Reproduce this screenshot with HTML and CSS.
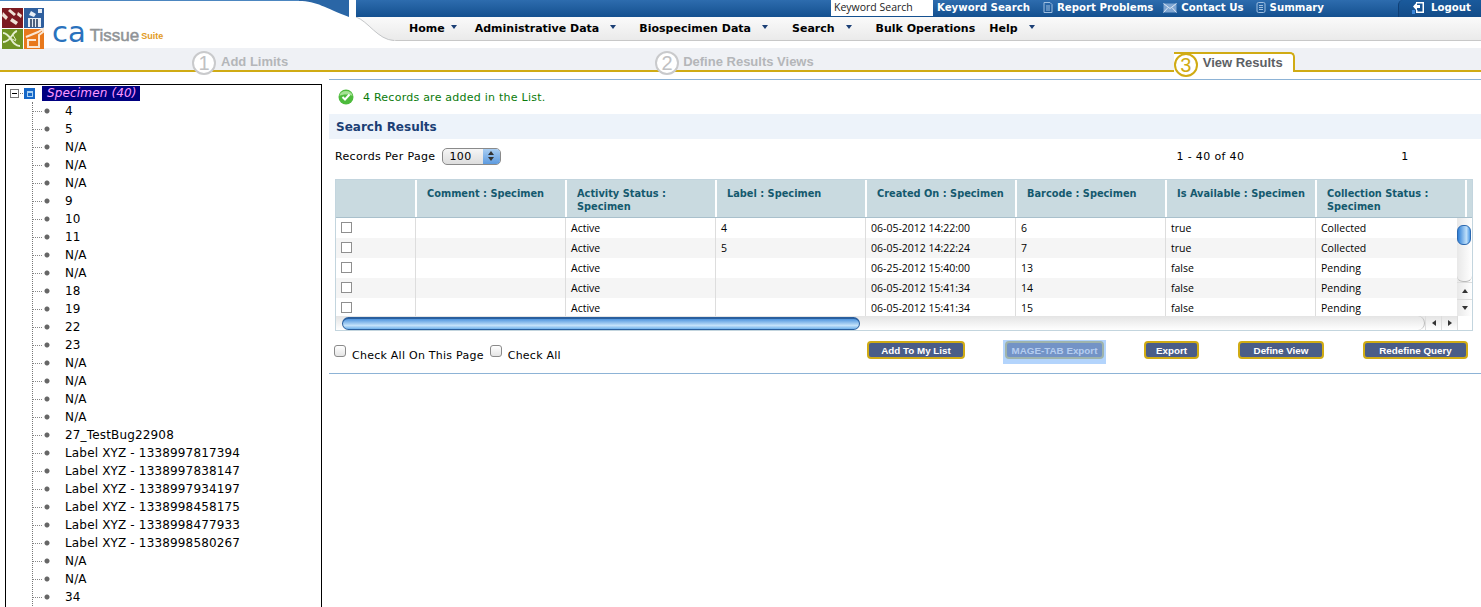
FILE: index.html
```html
<!DOCTYPE html>
<html lang="en">
<head>
    <meta charset="UTF-8">
    <link rel="stylesheet" href="styles.css">
    <title>caTissue Suite - View Results</title>
</head>
<body>

    <header class="top">
        <div class="brand">
            <div class="brand-bar"><svg class="brand-curve" width="50" height="17" viewBox="0 0 50 17"><path d="M0 1 C18 1 26 8 50 17 L50 0 L0 0 Z" fill="#2a66a6"/></svg></div>
            <div class="logo">
                <svg class="logo-tiles" width="45" height="46" viewBox="0 0 45 46">
                    <rect x="2" y="4" width="21" height="20" fill="#7c1a20"/>
                    <path d="M3 8l5 5-2 3-4-4zM10 5l6 5-2 2-6-5zM12 14l6 4-2 3-6-4zM18 8l4 3-1 3-4-3z" fill="#efe2d6"/>
                    <rect x="24" y="4" width="20" height="20" fill="#2f5f9e"/>
                    <path d="M28 14h13v9h-13zM31 7l5 3-2 3-5-2zM38 5h4v4h-4z" fill="#e6edf5"/>
                    <path d="M31 15v8M34 15v8M37 15v8" stroke="#1c3557" stroke-width="1.500"/>
                    <rect x="2" y="25" width="21" height="20" fill="#6f9222"/>
                    <path d="M3 29c8 0 8 13 17 13M3 38c8 0 9-10 14-11" stroke="#e6efcf" stroke-width="1.800" fill="none"/>
                    <path d="M10 34l6 3M13 31l3 5" stroke="#e6efcf"/>
                    <rect x="24" y="25" width="20" height="20" fill="#e8781c"/>
                    <path d="M26 33l12-5 5-3v3l-4 3v12h-11v-7h8" stroke="#fbe6d2" stroke-width="2" fill="none"/>
                </svg>
                <span class="logo-ca">ca</span><span class="logo-tissue">Tissue</span><span class="logo-suite">Suite</span>
            </div>
        </div>
        <div class="nav">
            <div class="nav-top">
                <div class="search-box">Keyword Search</div>
                <a class="top-link top-first">Keyword Search</a>
                <a class="top-link"><svg class="top-icon" width="10" height="11" viewBox="0 0 10 11"><path d="M1 .5h6l2 2v8H1z" fill="none" stroke="#9fbfe0"/><path d="M3 4h4M3 6h4M3 8h4" stroke="#9fbfe0"/></svg>Report Problems</a>
                <a class="top-link top-contact"><svg class="top-icon" width="14" height="10" viewBox="0 0 14 10"><path d="M.5.5h13v9H.5z" fill="#7fa6d2"/><path d="M.5.5l6.5 5 6.500-5M.5 9.500l4.500-5M13.500 9.500l-4.500-5" fill="none" stroke="#dbe7f4"/></svg>Contact Us</a>
                <a class="top-link top-summary"><svg class="top-icon" width="10" height="11" viewBox="0 0 10 11"><rect x="1" y=".5" width="8" height="10" rx="1.500" fill="none" stroke="#9fbfe0"/><path d="M3 3.500h4M3 5.500h4M3 7.500h4" stroke="#9fbfe0"/></svg>Summary</a>
                <a class="logout"><svg class="logout-icon" width="13" height="13" viewBox="0 0 13 13"><path d="M5 2.500h-1v-1.500h8v11H4v-3h1.500v1.500h5V2.500z" fill="#fff"/><path d="M0 7V4h3V1l4 4.500L3 10V7z" fill="#fff" transform="matrix(-1 0 0 1 8 0)"/><path d="M0 9h3v4H0z" fill="#3b86d8"/></svg>Logout</a>
            </div>
            <div class="nav-menu">
                <svg class="menu-curve" width="40" height="24" viewBox="0 0 40 24"><path d="M0 0 C12 4 22 23 38 23.500 L40 24 L0 24 Z" fill="#ffffff"/><path d="M0 0 C12 4 22 23 38 23.500" fill="none" stroke="#c4c6c8"/></svg>
                <a class="menu-item menu-home">Home<i class="caret"></i></a>
                <a class="menu-item menu-admin">Administrative Data<i class="caret"></i></a>
                <a class="menu-item menu-bio">Biospecimen Data<i class="caret"></i></a>
                <a class="menu-item menu-search">Search<i class="caret"></i></a>
                <a class="menu-item menu-bulk">Bulk Operations</a>
                <a class="menu-item menu-help">Help<i class="caret"></i></a>
            </div>
        </div>
    </header>

    <div class="steps">
        <div class="step step-one"><span class="step-num">1</span>Add Limits</div>
        <div class="step step-two"><span class="step-num">2</span>Define Results Views</div>
        <div class="step step-active"><span class="step-num">3</span>View Results</div>
    </div>

    <div class="main">
        <aside class="tree">
            <div class="tree-root">
                <span class="tree-toggle"></span>
                <span class="tree-link"></span>
                <svg class="tree-folder" width="11" height="11" viewBox="0 0 11 11"><rect width="11" height="11" fill="#1668c8"/><rect x="3" y="3" width="6" height="6" fill="#a9d2f5"/><rect x="4" y="5" width="4" height="3" fill="#1668c8"/></svg>
                <span class="tree-title">Specimen (40)</span>
            </div>
            <ul class="tree-list">
                <li>4</li><li>5</li><li>N/A</li><li>N/A</li><li>N/A</li><li>9</li><li>10</li><li>11</li>
                <li>N/A</li><li>N/A</li><li>18</li><li>19</li><li>22</li><li>23</li><li>N/A</li><li>N/A</li>
                <li>N/A</li><li>N/A</li><li>27_TestBug22908</li>
                <li>Label XYZ - 1338997817394</li>
                <li>Label XYZ - 1338997838147</li>
                <li>Label XYZ - 1338997934197</li>
                <li>Label XYZ - 1338998458175</li>
                <li>Label XYZ - 1338998477933</li>
                <li>Label XYZ - 1338998580267</li>
                <li>N/A</li><li>N/A</li><li>34</li>
            </ul>
        </aside>

        <section class="content">
            <div class="message">
                <svg class="ok-icon" width="16" height="16" viewBox="0 0 16 16"><circle cx="8" cy="8" r="7.500" fill="#4dbb3c"/><path d="M1.500 7a6.500 5 0 0 1 13 0c-3-2-10-2-13 0z" fill="#a5e294"/><path d="M4.500 8l2.500 2.500 4.500-5" fill="none" stroke="#fff" stroke-width="2"/></svg>
                4 Records are added in the List.
            </div>
            <h2 class="section-title">Search Results</h2>

            <div class="paging">
                <label class="per-page">Records Per Page
                    <span class="fake-select"><span class="fake-value">100</span><span class="fake-arrows"><i class="up"></i><i class="down"></i></span></span>
                </label>
                <span class="page-range">1 - 40 of 40</span>
                <span class="page-num">1</span>
            </div>

            <div class="grid">
                <div class="grid-head">
                    <div class="head-cell"></div>
                    <div class="head-cell">Comment : Specimen</div>
                    <div class="head-cell">Activity Status : Specimen</div>
                    <div class="head-cell">Label : Specimen</div>
                    <div class="head-cell">Created On : Specimen</div>
                    <div class="head-cell">Barcode : Specimen</div>
                    <div class="head-cell">Is Available : Specimen</div>
                    <div class="head-cell">Collection Status : Specimen</div>
                    <div class="head-cell"></div>
                </div>
                <div class="grid-middle">
                    <div class="grid-rows">
                        <div class="row"><div class="cell"><span class="check"></span></div><div class="cell"></div><div class="cell">Active</div><div class="cell">4</div><div class="cell">06-05-2012 14:22:00</div><div class="cell">6</div><div class="cell">true</div><div class="cell">Collected</div></div>
                        <div class="row"><div class="cell"><span class="check"></span></div><div class="cell"></div><div class="cell">Active</div><div class="cell">5</div><div class="cell">06-05-2012 14:22:24</div><div class="cell">7</div><div class="cell">true</div><div class="cell">Collected</div></div>
                        <div class="row"><div class="cell"><span class="check"></span></div><div class="cell"></div><div class="cell">Active</div><div class="cell"></div><div class="cell">06-25-2012 15:40:00</div><div class="cell">13</div><div class="cell">false</div><div class="cell">Pending</div></div>
                        <div class="row"><div class="cell"><span class="check"></span></div><div class="cell"></div><div class="cell">Active</div><div class="cell"></div><div class="cell">06-05-2012 15:41:34</div><div class="cell">14</div><div class="cell">false</div><div class="cell">Pending</div></div>
                        <div class="row"><div class="cell"><span class="check"></span></div><div class="cell"></div><div class="cell">Active</div><div class="cell"></div><div class="cell">06-05-2012 15:41:34</div><div class="cell">15</div><div class="cell">false</div><div class="cell">Pending</div></div>
                    </div>
                    <div class="vscroll">
                        <div class="vthumb"></div>
                        <div class="vtrack"></div>
                        <div class="scroll-btn"><i class="up"></i></div>
                        <div class="scroll-btn"><i class="down"></i></div>
                    </div>
                </div>
                <div class="hscroll">
                    <div class="hthumb"></div>
                    <div class="htrack"></div>
                    <div class="hbtn"><i class="left"></i></div>
                    <div class="hbtn"><i class="right"></i></div>
                    <div class="hcorner"></div>
                </div>
            </div>

            <div class="actions">
                <div class="check-all">
                    <span class="mac-check"></span>Check All On This Page
                    <span class="mac-check mac-check-two"></span>Check All
                </div>
                <div class="buttons">
                    <button class="btn btn-add">Add To My List</button>
                    <span class="btn-wrap"><button class="btn btn-off">MAGE-TAB Export</button></span>
                    <button class="btn btn-export">Export</button>
                    <button class="btn btn-view">Define View</button>
                    <button class="btn btn-query">Redefine Query</button>
                </div>
            </div>
        </section>
    </div>

</body>
</html>
```

FILE: styles.css
```css
html, body {
    height: 607px;
    overflow: hidden;
}

body {
    margin: 0;
    background: #ffffff;
    color: #000000;
    font-family: "DejaVu Sans", Verdana, sans-serif;
    font-size: 11px;
}

/* header */
.top {
    display: flex;
    height: 48px;
    gap: 7px;
}

.brand {
    width: 349px;
}

.brand-bar {
    height: 17px;
    border-top: 1px solid #4c86c0;
    box-sizing: border-box;
    display: flex;
    justify-content: flex-end;
}

.brand-curve {
    margin-top: -1px;
}

.logo {
    display: flex;
    align-items: flex-end;
    height: 31px;
    position: relative;
}

.logo-tiles {
    position: absolute;
    left: 0;
    top: -13px;
}

.logo-ca {
    margin-left: 52px;
    font-family: "DejaVu Sans", sans-serif;
    font-size: 29px;
    line-height: 32px;
    color: #2a72bd;
}

.logo-tissue {
    margin-left: 4px;
    font-family: "Liberation Sans", sans-serif;
    font-size: 17px;
    line-height: 25px;
    -webkit-text-stroke: .5px #8f9396;
    color: #8f9396;
}

.logo-suite {
    margin-left: 2px;
    font-family: "Liberation Sans", sans-serif;
    font-size: 9px;
    line-height: 23px;
    font-weight: bold;
    color: #e29a1e;
}

.nav {
    flex: 1;
}

.nav-top {
    display: flex;
    height: 17px;
    background: linear-gradient(#2d6cae, #14508f);
    color: #ffffff;
    font-weight: bold;
    font-size: 10.200px;
    line-height: 15px;
}

.search-box {
    width: 102px;
    height: 16px;
    margin-left: 475px;
    padding-left: 3px;
    box-sizing: border-box;
    background: #ffffff;
    color: #222222;
    font-family: "Open Sans", sans-serif;
    font-weight: normal;
    font-size: 10.500px;
}

.top-link {
    height: 15px;
    margin-left: 13px;
    display: flex;
    align-items: center;
}

.top-first {
    margin-left: 4px;
}

.top-contact {
    margin-left: 10px;
}

.top-summary {
    margin-left: 12px;
}

.top-icon {
    margin-right: 4px;
}

.logout {
    margin-left: auto;
    width: 83px;
    height: 17px;
    padding-left: 13px;
    padding-bottom: 2px;
    box-sizing: border-box;
    display: flex;
    align-items: center;
    border-left: 1px solid #0f3f75;
    border-top-left-radius: 5px;
    background: linear-gradient(#1a5a9c, #134c88);
}

.logout-icon {
    margin-right: 6px;
}

.nav-menu {
    display: flex;
    height: 24px;
    position: relative;
    background: linear-gradient(#fafafa, #eaeaea);
    border-bottom: 1px solid #c8c8c8;
    box-sizing: border-box;
    font-weight: bold;
    font-size: 11px;
    line-height: 23px;
}

.menu-curve {
    position: absolute;
    left: 0;
    top: 0;
}

.menu-item {
    display: flex;
    position: relative;
}

.caret {
    width: 0;
    height: 0;
    margin-top: 8px;
    margin-left: 11px;
    border-left: 3px solid transparent;
    border-right: 3px solid transparent;
    border-top: 4px solid #1b3f75;
}

.menu-home .caret { margin-left: 6px; }

.menu-home { margin-left: 53px; }
.menu-admin { margin-left: 18px; }
.menu-bio { margin-left: 23px; }
.menu-search { margin-left: 24px; }
.menu-bulk { margin-left: 24px; }
.menu-help { margin-left: 14px; }

/* steps */
.steps {
    display: flex;
    height: 22px;
    background: #eff1f5;
    border-bottom: 2px solid #d0ab14;
    font-family: "Liberation Sans", sans-serif;
    font-weight: bold;
    font-size: 13px;
    line-height: 28px;
    color: #b4b6b9;
}

.step {
    display: flex;
    height: 24px;
    box-sizing: border-box;
}

.step-num {
    width: 24px;
    height: 24px;
    margin-right: 5px;
    margin-top: 3px;
    box-sizing: border-box;
    border: 2px solid #c9cacc;
    border-radius: 50%;
    background: #ffffff;
    font-weight: normal;
    font-size: 20px;
    line-height: 20px;
    text-align: center;
    color: #c0c1c3;
}

.step-one { margin-left: 192px; }
.step-two { margin-left: 367px; }
.step-two .step-num { margin-right: 4px; }

.step-active {
    margin-left: 360px;
    margin-top: 4px;
    height: 20px;
    padding-right: 10px;
    background: #ffffff;
    border: 2px solid #d0ab14;
    border-left: none;
    border-bottom: none;
    border-top-right-radius: 5px;
    color: #5c6064;
    line-height: 17px;
}

.step-active .step-num {
    margin-top: -1px;
    border-color: #d0ab14;
    color: #d0ab14;
}

/* tree */
.main {
    display: flex;
    padding-top: 7px;
    align-items: flex-start;
}

.tree {
    width: 315px;
    height: 540px;
    margin-top: 5px;
    margin-left: 5px;
    border: 1px solid #000000;
    font-size: 12px;
    flex-shrink: 0;
}

.tree-root {
    display: flex;
    align-items: center;
    height: 16px;
    margin-bottom: 1px;
    padding-left: 4px;
}

.tree-toggle {
    width: 9px;
    height: 9px;
    box-sizing: border-box;
    border: 1px solid #777777;
    background: linear-gradient(#000, #000) center / 5px 1px no-repeat;
}

.tree-link {
    width: 3px;
    border-top: 1px dotted #777777;
    margin: 0 1px;
}

.tree-folder {
    flex-shrink: 0;
}

.tree-title {
    margin-left: 7px;
    padding: 0 3px 0 5px;
    background: #000080;
    color: #ff99ff;
    font-style: italic;
    letter-spacing: .15px;
    line-height: 15px;
}

.tree-list {
    list-style: none;
    margin: 0 0 0 26px;
    padding: 0;
    border-left: 1px dotted #777777;
}

.tree-list li {
    display: flex;
    align-items: center;
    height: 18px;
    white-space: nowrap;
    letter-spacing: .16px;
    background: radial-gradient(circle at 14px 9px, #666666 2px, transparent 3px);
}

.tree-list li::before {
    content: "";
    width: 9px;
    margin-right: 23px;
    border-top: 1px dotted #888888;
}

/* content */
.content {
    flex: 1;
    margin-left: 7px;
    border-top: 1px solid #8db3d6;
}

.message {
    display: flex;
    align-items: center;
    height: 34px;
    padding-left: 9px;
    color: #0a7a0a;
    letter-spacing: .24px;
}

.ok-icon {
    margin-right: 9px;
}

.section-title {
    margin: 0;
    height: 25px;
    padding-left: 7px;
    background: #edf3fa;
    color: #1b3f75;
    font-size: 12px;
    line-height: 26px;
}

.paging {
    display: flex;
    align-items: center;
    height: 36px;
    padding-left: 6px;
    padding-bottom: 2px;
    box-sizing: border-box;
    letter-spacing: .35px;
}

.per-page {
    display: flex;
    align-items: center;
}

.fake-select {
    display: flex;
    width: 59px;
    height: 17px;
    margin-left: 6px;
    box-sizing: border-box;
    border: 1px solid #8a8a8a;
    border-radius: 5px;
    overflow: hidden;
    background: linear-gradient(#f6f6f6, #dddddd);
}

.fake-value {
    flex: 1;
    padding-left: 7px;
    line-height: 15px;
}

.fake-arrows {
    width: 17px;
    display: flex;
    flex-direction: column;
    align-items: center;
    justify-content: center;
    gap: 2px;
    background: linear-gradient(#a8cdf2, #5d9be0);
}

.up, .down, .left, .right {
    display: block;
    width: 0;
    height: 0;
}

.up {
    border-left: 3px solid transparent;
    border-right: 3px solid transparent;
    border-bottom: 4px solid #333333;
}

.down {
    border-left: 3px solid transparent;
    border-right: 3px solid transparent;
    border-top: 4px solid #333333;
}

.left {
    border-top: 3px solid transparent;
    border-bottom: 3px solid transparent;
    border-right: 4px solid #333333;
}

.right {
    border-top: 3px solid transparent;
    border-bottom: 3px solid transparent;
    border-left: 4px solid #333333;
}

.page-range {
    margin-left: 676px;
}

.page-num {
    margin-left: 157px;
}

/* grid */
.grid {
    width: 1138px;
    margin-left: 6px;
    margin-top: 4px;
    border: 1px solid #c3d5de;
    box-sizing: border-box;
    font-family: "Open Sans", sans-serif;
    font-size: 10.500px;
}

.grid-head {
    display: grid;
    grid-template-columns: 81px repeat(7, 150px) 1fr;
    height: 38px;
    box-sizing: border-box;
    background: #c9dae0;
    border-bottom: 1px solid #a9c0cc;
    font-family: "DejaVu Sans", sans-serif;
    font-weight: bold;
    font-size: 9.800px;
    line-height: 13px;
    color: #14596e;
}

.head-cell {
    padding: 7px 0 0 10px;
    border-right: 2px solid #ffffff;
    box-sizing: border-box;
}

.head-cell:last-child {
    border-right: none;
}

.grid-middle {
    display: flex;
    height: 98px;
    overflow: hidden;
}

.grid-rows {
    flex: 1;
    min-width: 0;
}

.row {
    display: grid;
    grid-template-columns: 80px repeat(6, 150px) 1fr;
    height: 20px;
    line-height: 20px;
    white-space: nowrap;
}

.row:nth-child(even) {
    background: #f5f5f5;
}

.cell {
    padding-left: 5px;
    border-right: 1px solid #dddddd;
    overflow: hidden;
}

.cell:last-child {
    border-right: none;
}

.check {
    display: block;
    width: 11px;
    height: 11px;
    margin-top: 4px;
    box-sizing: border-box;
    border: 1px solid #8f8f8f;
    background: #ffffff;
}

.vscroll {
    display: flex;
    flex-direction: column;
    width: 15px;
    background: linear-gradient(to right, #e8e8e8, #ffffff);
}

.vthumb {
    width: 14px;
    height: 20px;
    margin-top: 7px;
    box-sizing: border-box;
    border: 1px solid #2b68b0;
    border-radius: 6px;
    background: linear-gradient(to right, #2f7fd6, #bfe0fa 70%, #4f9ae6);
}

.vtrack {
    flex: 1;
    border-bottom: 1px solid #bbbbbb;
    border-radius: 0 0 6px 6px;
}

.scroll-btn {
    height: 17px;
    flex-shrink: 0;
    box-sizing: border-box;
    display: flex;
    align-items: center;
    justify-content: center;
    border-top: 1px solid #dddddd;
}

.hscroll {
    display: flex;
    align-items: center;
    height: 14px;
    padding-left: 6px;
    background: linear-gradient(#e4e4e4, #ffffff);
}

.hthumb {
    width: 518px;
    height: 13px;
    box-sizing: border-box;
    border: 1px solid #2a5f9e;
    border-top-width: 2px;
    border-radius: 7px;
    background: linear-gradient(#4f95de, #c4e2fa 65%, #6fb0ea);
}

.htrack {
    flex: 1;
    height: 14px;
    border-right: 1px solid #bbbbbb;
    border-radius: 0 7px 7px 0;
}

.hbtn {
    width: 16px;
    height: 14px;
    display: flex;
    align-items: center;
    justify-content: center;
    border-left: 1px solid #dddddd;
    box-sizing: border-box;
}

.hcorner {
    width: 15px;
    height: 14px;
    background: #ffffff;
    border-left: 1px solid #dddddd;
    box-sizing: border-box;
}

/* bottom actions */
.actions {
    display: flex;
    height: 42px;
    border-bottom: 1px solid #8db3d6;
}

.check-all {
    display: flex;
    align-items: flex-start;
    width: 538px;
    padding-left: 5px;
    padding-top: 18px;
    box-sizing: border-box;
    letter-spacing: .25px;
    line-height: 13px;
}

.mac-check {
    width: 12px;
    height: 12px;
    margin-right: 6px;
    margin-top: -4px;
    box-sizing: border-box;
    border: 1px solid #8a8a8a;
    border-radius: 3px;
    background: linear-gradient(#ffffff, #e4e4e4);
}

.mac-check-two {
    margin-left: 6px;
}

.buttons {
    display: flex;
    align-items: flex-start;
    padding-top: 10px;
}

.btn {
    height: 18px;
    padding: 1px 0 0;
    box-sizing: border-box;
    background: #4a5d88;
    border: 2px solid #d0ab14;
    border-radius: 4px;
    color: #ffffff;
    font-family: "Liberation Sans", sans-serif;
    font-weight: bold;
    font-size: 9.800px;
    line-height: 13px;
}

.btn-add { width: 98px; }
.btn-export { width: 55px; margin-left: 38px; }
.btn-view { width: 86px; margin-left: 39px; }
.btn-query { width: 105px; margin-left: 39px; }

.btn-wrap {
    display: flex;
    justify-content: center;
    width: 103px;
    height: 24px;
    margin-left: 38px;
    margin-top: -1px;
    padding-top: 1px;
    box-sizing: border-box;
    background: #b3d4fc;
}

.btn-off {
    width: 99px;
    background: #7393c6;
    border-color: #9fb4ac;
    color: #b5cdf0;
}
```
